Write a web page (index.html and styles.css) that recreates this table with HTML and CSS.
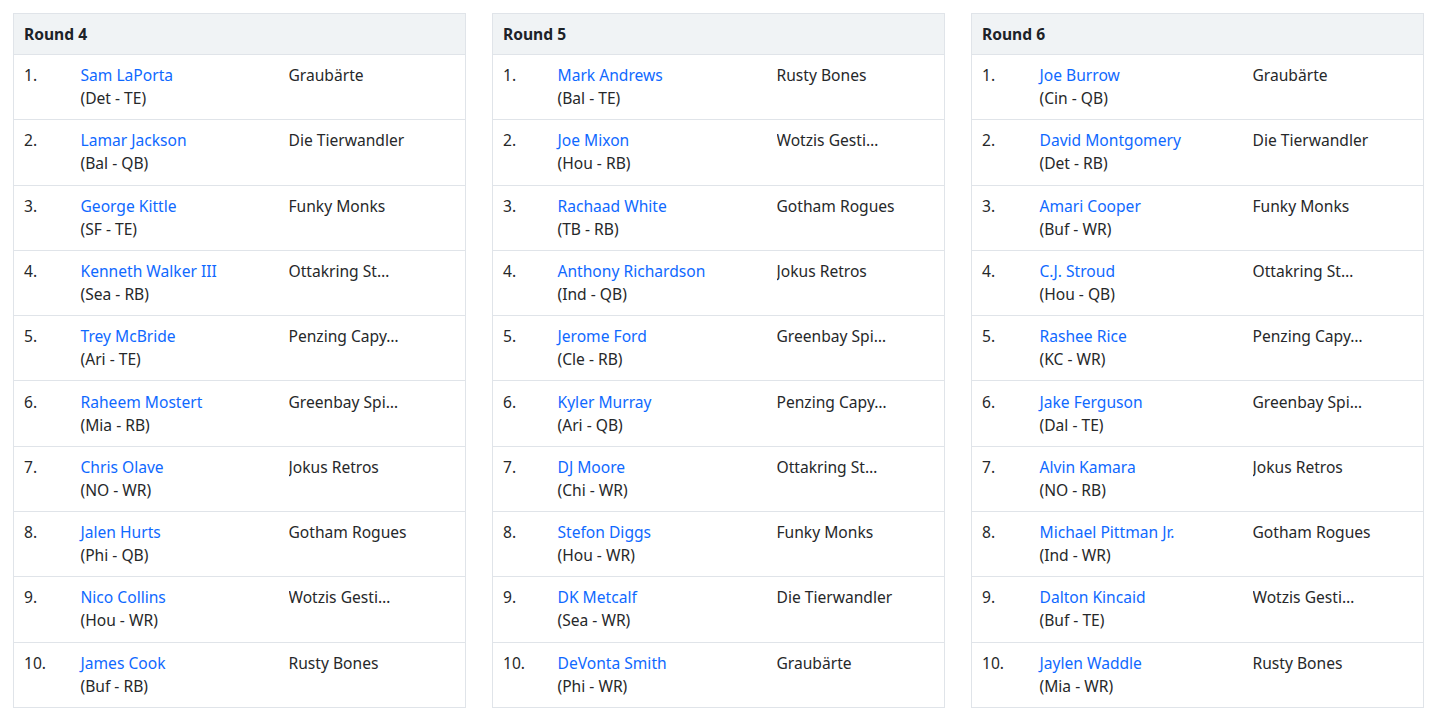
FILE: index.html
```html
<!DOCTYPE html>
<html lang="de">
<head>
<meta charset="utf-8">
<title>Draft Results</title>
<link rel="stylesheet" href="styles.css">
</head>
<body>
<div class="rounds">
  <table class="round r4">
    <colgroup><col class="c-rank"><col class="c-name"><col class="c-team"></colgroup>
    <thead><tr><th colspan="3">Round 4</th></tr></thead>
    <tbody>
      <tr><td>1.</td><td><a href="#">Sam LaPorta</a><span class="pos">(Det - TE)</span></td><td><span class="team">Graubärte</span></td></tr>
      <tr><td>2.</td><td><a href="#">Lamar Jackson</a><span class="pos">(Bal - QB)</span></td><td><span class="team">Die Tierwandler</span></td></tr>
      <tr><td>3.</td><td><a href="#">George Kittle</a><span class="pos">(SF - TE)</span></td><td><span class="team">Funky Monks</span></td></tr>
      <tr><td>4.</td><td><a href="#">Kenneth Walker III</a><span class="pos">(Sea - RB)</span></td><td><span class="team">Ottakring St…</span></td></tr>
      <tr><td>5.</td><td><a href="#">Trey McBride</a><span class="pos">(Ari - TE)</span></td><td><span class="team">Penzing Capy…</span></td></tr>
      <tr><td>6.</td><td><a href="#">Raheem Mostert</a><span class="pos">(Mia - RB)</span></td><td><span class="team">Greenbay Spi…</span></td></tr>
      <tr><td>7.</td><td><a href="#">Chris Olave</a><span class="pos">(NO - WR)</span></td><td><span class="team">Jokus Retros</span></td></tr>
      <tr><td>8.</td><td><a href="#">Jalen Hurts</a><span class="pos">(Phi - QB)</span></td><td><span class="team">Gotham Rogues</span></td></tr>
      <tr><td>9.</td><td><a href="#">Nico Collins</a><span class="pos">(Hou - WR)</span></td><td><span class="team">Wotzis Gesti…</span></td></tr>
      <tr><td>10.</td><td><a href="#">James Cook</a><span class="pos">(Buf - RB)</span></td><td><span class="team">Rusty Bones</span></td></tr>
    </tbody>
  </table>
  <table class="round r5">
    <colgroup><col class="c-rank"><col class="c-name"><col class="c-team"></colgroup>
    <thead><tr><th colspan="3">Round 5</th></tr></thead>
    <tbody>
      <tr><td>1.</td><td><a href="#">Mark Andrews</a><span class="pos">(Bal - TE)</span></td><td><span class="team">Rusty Bones</span></td></tr>
      <tr><td>2.</td><td><a href="#">Joe Mixon</a><span class="pos">(Hou - RB)</span></td><td><span class="team">Wotzis Gesti…</span></td></tr>
      <tr><td>3.</td><td><a href="#">Rachaad White</a><span class="pos">(TB - RB)</span></td><td><span class="team">Gotham Rogues</span></td></tr>
      <tr><td>4.</td><td><a href="#">Anthony Richardson</a><span class="pos">(Ind - QB)</span></td><td><span class="team">Jokus Retros</span></td></tr>
      <tr><td>5.</td><td><a href="#">Jerome Ford</a><span class="pos">(Cle - RB)</span></td><td><span class="team">Greenbay Spi…</span></td></tr>
      <tr><td>6.</td><td><a href="#">Kyler Murray</a><span class="pos">(Ari - QB)</span></td><td><span class="team">Penzing Capy…</span></td></tr>
      <tr><td>7.</td><td><a href="#">DJ Moore</a><span class="pos">(Chi - WR)</span></td><td><span class="team">Ottakring St…</span></td></tr>
      <tr><td>8.</td><td><a href="#">Stefon Diggs</a><span class="pos">(Hou - WR)</span></td><td><span class="team">Funky Monks</span></td></tr>
      <tr><td>9.</td><td><a href="#">DK Metcalf</a><span class="pos">(Sea - WR)</span></td><td><span class="team">Die Tierwandler</span></td></tr>
      <tr><td>10.</td><td><a href="#">DeVonta Smith</a><span class="pos">(Phi - WR)</span></td><td><span class="team">Graubärte</span></td></tr>
    </tbody>
  </table>
  <table class="round r6">
    <colgroup><col class="c-rank"><col class="c-name"><col class="c-team"></colgroup>
    <thead><tr><th colspan="3">Round 6</th></tr></thead>
    <tbody>
      <tr><td>1.</td><td><a href="#">Joe Burrow</a><span class="pos">(Cin - QB)</span></td><td><span class="team">Graubärte</span></td></tr>
      <tr><td>2.</td><td><a href="#">David Montgomery</a><span class="pos">(Det - RB)</span></td><td><span class="team">Die Tierwandler</span></td></tr>
      <tr><td>3.</td><td><a href="#">Amari Cooper</a><span class="pos">(Buf - WR)</span></td><td><span class="team">Funky Monks</span></td></tr>
      <tr><td>4.</td><td><a href="#">C.J. Stroud</a><span class="pos">(Hou - QB)</span></td><td><span class="team">Ottakring St…</span></td></tr>
      <tr><td>5.</td><td><a href="#">Rashee Rice</a><span class="pos">(KC - WR)</span></td><td><span class="team">Penzing Capy…</span></td></tr>
      <tr><td>6.</td><td><a href="#">Jake Ferguson</a><span class="pos">(Dal - TE)</span></td><td><span class="team">Greenbay Spi…</span></td></tr>
      <tr><td>7.</td><td><a href="#">Alvin Kamara</a><span class="pos">(NO - RB)</span></td><td><span class="team">Jokus Retros</span></td></tr>
      <tr><td>8.</td><td><a href="#">Michael Pittman Jr.</a><span class="pos">(Ind - WR)</span></td><td><span class="team">Gotham Rogues</span></td></tr>
      <tr><td>9.</td><td><a href="#">Dalton Kincaid</a><span class="pos">(Buf - TE)</span></td><td><span class="team">Wotzis Gesti…</span></td></tr>
      <tr><td>10.</td><td><a href="#">Jaylen Waddle</a><span class="pos">(Mia - WR)</span></td><td><span class="team">Rusty Bones</span></td></tr>
    </tbody>
  </table>
</div>
</body>
</html>
```

FILE: styles.css
```css
html, body {
  margin: 0;
  padding: 0;
  background: #ffffff;
}
body {
  font-family: "Noto Sans", "Open Sans", sans-serif;
  font-size: 15.6px;
  color: #26282a;
}
.rounds {
  display: grid;
  grid-template-columns: 453px 453px 453px;
  column-gap: 26px;
  padding: 13px 0 0 13px;
  align-items: start;
}
.round {
  width: 453px;
  border-collapse: collapse;
  table-layout: fixed;
  border: 1px solid #e0e4e9;
}
.round th {
  background: #f0f3f5;
  text-align: left;
  font-weight: 700;
  font-size: 15.6px;
  height: 41px;
  padding: 0 10px;
  box-sizing: border-box;
  line-height: 20px;
  border-bottom: 1px solid #e0e4e9;
  color: #1d2228;
}
.round td {
  vertical-align: top;
  padding: 9.15px 10px 9.15px 10px;
  line-height: 23px;
  border-top: 1px solid #e0e4e9;
  white-space: nowrap;
}
.round tbody tr:first-child td {
  border-top: none;
}
.round td:first-child {
  padding-left: 10px;
  padding-right: 0;
}
.round a {
  display: block;
  color: #0f69ff;
  text-decoration: none;
}
.pos {
  display: block;
}
.team {
  display: block;
  max-width: 130px;
  overflow: hidden;
  text-overflow: ellipsis;
  white-space: nowrap;
}
.r4 .c-rank { width: 57px; }
.r4 .c-name { width: 208px; }
.r5 .c-rank { width: 55px; }
.r5 .c-name { width: 219px; }
.r6 .c-rank { width: 58px; }
.r6 .c-name { width: 213px; }
```
